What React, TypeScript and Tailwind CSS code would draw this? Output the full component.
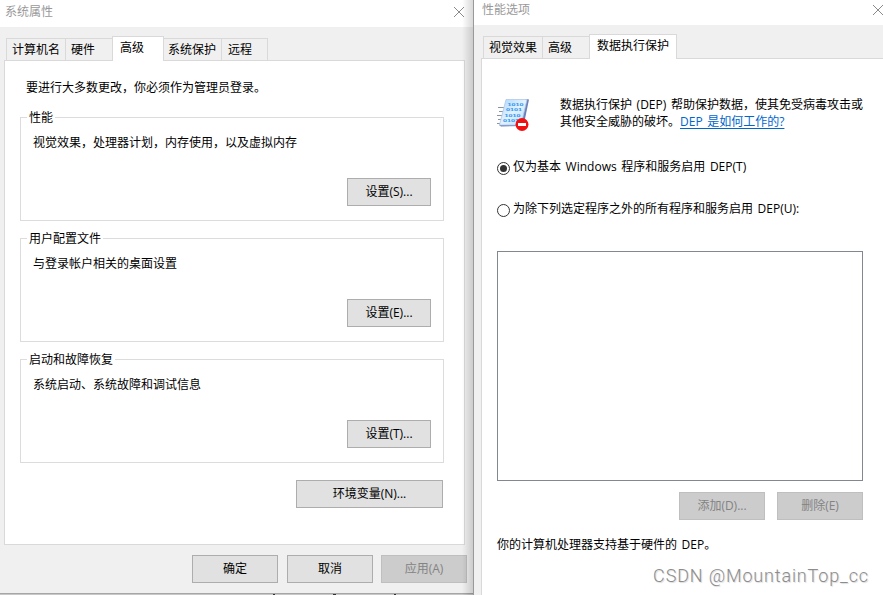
import React from 'react';
import clsx from 'clsx';

interface Tab {
  label: string;
  width: string;
  active?: boolean;
}

const systemTabs: Tab[] = [
  { label: '计算机名', width: 'w-[59px]' },
  { label: '硬件', width: 'w-[47px]' },
  { label: '高级', width: 'w-[52px]', active: true },
  { label: '系统保护', width: 'w-[57px]' },
  { label: '远程', width: 'w-[47px]' }
];

const performanceTabs: Tab[] = [
  { label: '视觉效果', width: 'w-[59px]' },
  { label: '高级', width: 'w-[47px]' },
  { label: '数据执行保护', width: 'w-[88px]', active: true }
];

const sections = [
  { title: '性能', text: '视觉效果，处理器计划，内存使用，以及虚拟内存', button: '设置(S)...' },
  { title: '用户配置文件', text: '与登录帐户相关的桌面设置', button: '设置(E)...' },
  { title: '启动和故障恢复', text: '系统启动、系统故障和调试信息', button: '设置(T)...' }
];

const CloseIcon = () => (
  <svg width="12" height="12" viewBox="0 0 12 12" className="shrink-0">
    <path d="M1 1L11 11M11 1L1 11" stroke="#8a8a8a" strokeWidth="1" fill="none" />
  </svg>
);

const TabBar = ({ tabs }: { tabs: Tab[] }) => (
  <div className="flex h-[25px] items-end">
    {tabs.map((tab, i) => (
      <div
        key={tab.label}
        className={clsx(
          'shrink-0 whitespace-nowrap border-[#d9d9d9]',
          tab.width,
          tab.active
            ? 'relative z-10 h-[25px] border-l border-r border-t bg-white pl-[7px] leading-[22px]'
            : 'mb-px h-[22px] border-t bg-[#f0f0f0] leading-[22px]',
          !tab.active && !tabs[i - 1]?.active && 'border-l',
          !tab.active && (tabs[i - 1]?.active ? 'pl-[4px]' : i === tabs.length - 1 ? 'pl-[6px]' : 'pl-[5px]'),
          i === tabs.length - 1 && 'border-r'
        )}
      >
        {tab.label}
      </div>
    ))}
  </div>
);

const DialogButton = ({ label, className, disabled }: { label: string; className: string; disabled?: boolean }) => (
  <button
    disabled={disabled}
    className={clsx(
      'flex h-7 shrink-0 items-center justify-center border pb-px',
      disabled ? 'border-[#bfbfbf] bg-[#cccccc] text-[#838383]' : 'border-[#adadad] bg-[#e1e1e1] text-black',
      className
    )}
  >
    {label}
  </button>
);

const DepIcon = () => (
  <svg width="34" height="34" viewBox="0 0 34 34" className="shrink-0">
    <defs>
      <linearGradient id="sheet" x1="0" y1="0" x2="1" y2="1">
        <stop offset="0" stopColor="#a9d6ff" />
        <stop offset="0.5" stopColor="#e2f2ff" />
        <stop offset="1" stopColor="#b4dcff" />
      </linearGradient>
    </defs>
    <path d="M1 9.500H7M2 13.500H6M0 17.500H5M1 21.500H4M0 25.500H3" stroke="#8795a1" strokeWidth="1" />
    <path d="M29 1L32 1.500L26.500 28L4 28.500L2 27Z" fill="#6a80b8" />
    <path d="M9 1.500H30L24 27H2.500Z" fill="url(#sheet)" stroke="#b3c6e6" strokeWidth="0.800" />
    <g
      fill="#2b8fec"
      fontSize="4.4"
      fontWeight="bold"
      fontFamily="'Liberation Sans', sans-serif"
    >
      <text x="10.500" y="8" textLength="16" lengthAdjust="spacingAndGlyphs">1010</text>
      <text x="9" y="13.400" textLength="16" lengthAdjust="spacingAndGlyphs">0101</text>
      <text x="7.500" y="18.800" textLength="16" lengthAdjust="spacingAndGlyphs">1010</text>
      <text x="6" y="24.200" textLength="16" lengthAdjust="spacingAndGlyphs">0101</text>
    </g>
    <circle cx="25" cy="26.500" r="6.500" fill="#f01010" />
    <rect x="21" y="25" width="8" height="3" fill="#fff" />
  </svg>
);

const Radio = ({ label, checked }: { label: string; checked?: boolean }) => (
  <div className="flex h-[18px] items-center">
    <span className="mr-[3px] mt-[3px] flex size-[13px] items-center justify-center rounded-full border border-[#333333] bg-white">
      {checked && <span className="size-[7px] rounded-full bg-[#333333]" />}
    </span>
    <span>{label}</span>
  </div>
);

const SystemProperties = () => (
  <div className="relative flex w-[474px] shrink-0 flex-col bg-[#f0f0f0]">
    <div className="flex h-[27px] shrink-0 items-center justify-between bg-white pb-[4px] pl-[5px] pr-[9px] text-[#999999]">
      <span>系统属性</span>
      <CloseIcon />
    </div>
    <div className="ml-[6px] mt-[9px]">
      <TabBar tabs={systemTabs} />
    </div>
    <div className="-mt-px ml-1 flex h-[485px] w-[461px] shrink-0 flex-col border border-[#d9d9d9] bg-white pl-[15px] pr-5">
      <p className="ml-[6px] mt-[18px] h-[18px] leading-[18px]">要进行大多数更改，你必须作为管理员登录。</p>
      <div className="mt-[12px] flex flex-col gap-[9px]">
        {sections.map((section) => (
          <fieldset key={section.title} className="flex h-[112px] w-[424px] flex-col border border-[#dcdcdc] pl-[6px] pr-3">
            <legend className="h-[17px] px-[2px] leading-[17px]">{section.title}</legend>
            <p className="ml-[6px] mt-[8px] h-[18px] leading-[18px]">{section.text}</p>
            <DialogButton label={section.button} className="ml-auto mt-[26px] w-[84px]" />
          </fieldset>
        ))}
      </div>
      <DialogButton label="环境变量(N)..." className="ml-auto mr-px mt-[17px] w-[147px]" />
    </div>
    <div className="mt-[10px] flex pl-[192px]">
      <DialogButton label="确定" className="w-[86px]" />
      <DialogButton label="取消" className="ml-[9px] w-[86px]" />
      <DialogButton label="应用(A)" className="ml-[8px] w-[86px]" disabled />
    </div>
    {/* window bottom edge with what shows beneath it */}
    <div className="mt-auto flex h-[2px] shrink-0 border-t border-[#a6a6a6] bg-[#c8c8c8]">
      <span className="ml-[273px] h-px w-[2px] bg-[#333333]" />
      <span className="ml-[58px] h-px w-[3px] bg-[#333333]" />
      <span className="ml-[58px] h-px w-[2px] bg-[#333333]" />
    </div>
    <div className="absolute inset-y-0 right-0 w-[12px] border-r border-[#999999] bg-linear-to-r from-transparent to-black/15" />
  </div>
);

const PerformanceOptions = () => (
  <div className="flex w-[409px] shrink-0 flex-col overflow-hidden bg-[#f0f0f0]">
    <div className="flex h-[25px] w-[410px] shrink-0 items-center justify-between bg-white pb-[5px] pl-[8px] text-[#999999]">
      <span>性能选项</span>
      <CloseIcon />
    </div>
    <div className="ml-[9px] mt-[9px]">
      <TabBar tabs={performanceTabs} />
    </div>
    <div className="-mt-px ml-[7px] flex grow flex-col border-l border-t border-[#d9d9d9] bg-white pl-[15px]">
      <div className="mt-[37px] flex">
        <div className="mt-[2px]">
          <DepIcon />
        </div>
        <p className="ml-[29px] whitespace-nowrap leading-[17px]">
          数据执行保护 (DEP) 帮助保护数据，使其免受病毒攻击或
          <br />
          其他安全威胁的破坏。
          <a className="text-[#0066cc] underline underline-offset-2">DEP 是如何工作的?</a>
        </p>
      </div>
      <div className="mt-[26px] flex flex-col gap-6">
        <Radio label="仅为基本 Windows 程序和服务启用 DEP(T)" checked />
        <Radio label="为除下列选定程序之外的所有程序和服务启用 DEP(U):" />
      </div>
      <div className="mt-[33px] h-[230px] w-[366px] shrink-0 border border-[#828790]" />
      <div className="mt-[11px] flex w-[366px] justify-end gap-3">
        <DialogButton label="添加(D)..." className="w-[86px]" disabled />
        <DialogButton label="删除(E)" className="w-[86px]" disabled />
      </div>
      <p className="mt-[16px] h-[18px] leading-[18px]">你的计算机处理器支持基于硬件的 DEP。</p>
    </div>
  </div>
);

const App: React.FC = () => {
  return (
    <div className="relative flex h-[595px] w-[883px] overflow-hidden bg-white font-['Open_Sans','Noto_Sans_CJK_SC',sans-serif] text-[12px] leading-[18px] text-black [word-spacing:1.5px]">
      <SystemProperties />
      <PerformanceOptions />
      <div className="absolute bottom-[7px] right-[14px] whitespace-nowrap font-['Roboto',sans-serif] text-[18px] font-light leading-6 tracking-[0.85px] text-[#8c8c8c] [text-shadow:1px_1px_1px_rgba(0,0,0,0.15)] [word-spacing:0]">
        CSDN @MountainTop_cc
      </div>
    </div>
  );
};

export default App;
